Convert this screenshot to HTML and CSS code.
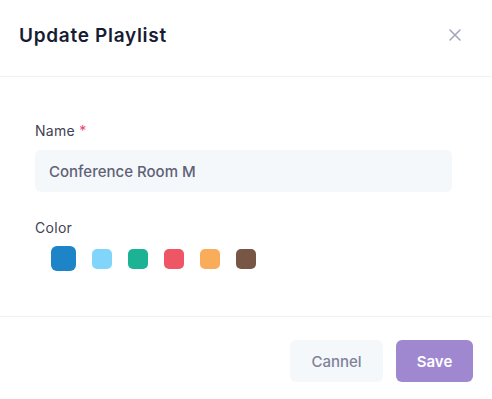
FILE: index.html
```html
<!DOCTYPE html>
<html lang="en">
<head>
    <meta charset="UTF-8">
    <meta name="viewport" content="width=device-width, initial-scale=1.0">
    <title>Update Playlist</title>
    <link rel="stylesheet" href="styles.css">
</head>
<body>
    <div class="modal">
        <div class="modal-header">
            <h2 class="modal-title">Update Playlist</h2>
            <button class="btn-close" type="button" aria-label="Close">
                <svg width="12" height="12" viewBox="0 0 12 12">
                    <path d="M1 1 L11 11 M11 1 L1 11" stroke="#a1a5b7" stroke-width="1.5" stroke-linecap="round"/>
                </svg>
            </button>
        </div>

        <form class="modal-body" id="playlistForm">
            <label class="form-label" for="name">Name <span class="required">*</span></label>
            <input class="form-input" type="text" id="name" name="name" value="Conference Room M">

            <label class="form-label color-label">Color</label>
            <div class="swatches">
                <span class="swatch selected" style="background-color: #1d84c8;"></span>
                <span class="swatch" style="background-color: #81d5fa;"></span>
                <span class="swatch" style="background-color: #1bb394;"></span>
                <span class="swatch" style="background-color: #ee5565;"></span>
                <span class="swatch" style="background-color: #f9ad5a;"></span>
                <span class="swatch" style="background-color: #785646;"></span>
            </div>
        </form>

        <div class="modal-footer">
            <button class="btn btn-light" type="button">Cannel</button>
            <button class="btn btn-primary" type="submit" form="playlistForm">Save</button>
        </div>
    </div>
</body>
</html>
```

FILE: styles.css
```css
body {
    font-family: Inter, "Noto Sans", sans-serif;
    background-color: #fff;
    margin: 0;
    padding: 0;
}
.modal {
    width: 492px;
    height: 399px;
    background-color: #fff;
}
.modal-header {
    height: 77px;
    box-sizing: border-box;
    padding: 0 27px 6px 19px;
    display: flex;
    align-items: center;
    justify-content: space-between;
    border-bottom: 1px solid #eff2f5;
}
.modal-title {
    margin: 0;
    font-size: 19px;
    font-weight: 600;
    letter-spacing: 0.7px;
    color: #181c32;
}
.btn-close {
    border: none;
    background: none;
    padding: 0;
    width: 20px;
    height: 20px;
    display: flex;
    align-items: center;
    justify-content: center;
    cursor: pointer;
}
.modal-body {
    display: flex;
    flex-direction: column;
    padding: 44px 40px 45px 35px;
}
.form-label {
    font-size: 14px;
    line-height: 20px;
    font-weight: 400;
    letter-spacing: 0.3px;
    color: #3f4254;
    margin-bottom: 9px;
}
.required {
    color: #f1416c;
}
.form-input {
    height: 42px;
    box-sizing: border-box;
    padding: 0 14px;
    border: none;
    border-radius: 6px;
    background-color: #f5f8fa;
    font-family: inherit;
    font-size: 15px;
    font-weight: 500;
    color: #5e6278;
    outline: none;
}
.color-label {
    margin-top: 26px;
    margin-bottom: 8px;
}
.swatches {
    display: flex;
    align-items: center;
    height: 25px;
}
.swatch {
    width: 20px;
    height: 20px;
    margin-left: 16px;
    border-radius: 5px;
    cursor: pointer;
}
.swatch.selected {
    width: 25px;
    height: 25px;
    border-radius: 6px;
}
.modal-footer {
    border-top: 1px solid #eff2f5;
    padding: 23px 19px 0 0;
    display: flex;
    justify-content: flex-end;
    gap: 13px;
}
.btn {
    height: 42px;
    border: none;
    border-radius: 6px;
    font-family: inherit;
    font-size: 15px;
    cursor: pointer;
}
.btn-light {
    width: 93px;
    background-color: #f5f8fa;
    color: #7e8299;
    font-weight: 500;
}
.btn-primary {
    width: 77px;
    background-color: #a088d1;
    color: #fff;
    font-weight: 600;
}
```
